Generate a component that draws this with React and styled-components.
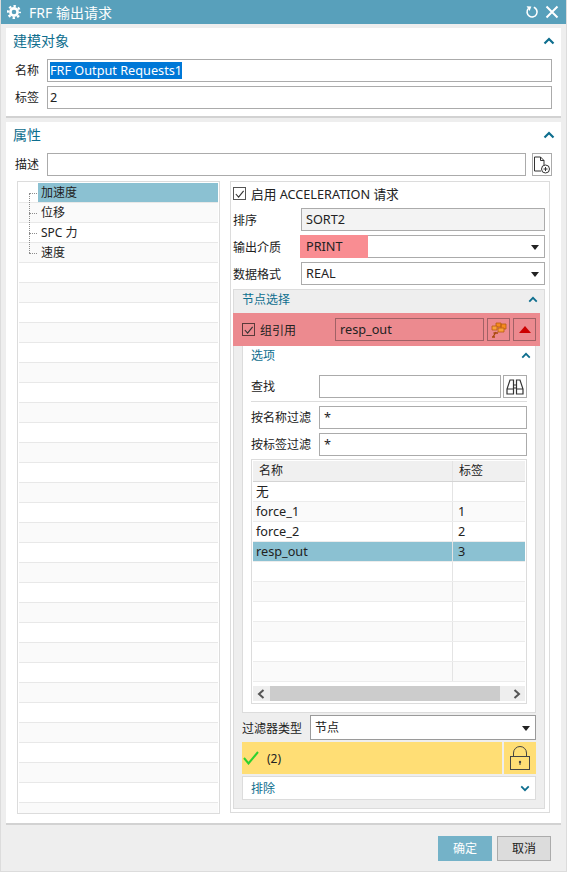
import React from "react";
import styled, { createGlobalStyle } from "styled-components";

const FONT = `"Noto Sans", "Noto Sans CJK SC", sans-serif`;

const treeItems = ["加速度", "位移", "SPC 力", "速度"];
const treeRows = Array.from({ length: 32 }, (_, i) => treeItems[i] || "");

const tableRows = [
    ["无", ""],
    ["force_1", "1"],
    ["force_2", "2"],
    ["resp_out", "3"],
    ["", ""],
    ["", ""],
    ["", ""],
    ["", ""],
    ["", ""],
    ["", ""],
];

const Chevron = ({ down, small }) => (
    <ChevronIcon viewBox="0 0 12 8" $small={small}>
        <path d={down ? "M1.5 1.5 L6 6 L10.5 1.5" : "M1.5 6.5 L6 2 L10.5 6.5"} fill="none" stroke="#0e6e8e" strokeWidth="2.2" />
    </ChevronIcon>
);

const CheckMark = () => (
    <svg viewBox="0 0 12 12" width="12" height="12">
        <path d="M2 6 L5 9.5 L10.5 2.5" fill="none" stroke="#333" strokeWidth="1.2" />
    </svg>
);

const Select = ({ children, highlight, tall }) => (
    <SelectBox $tall={tall}>
        <SelectText $highlight={highlight} $tall={tall}>{children}</SelectText>
        <Caret $tall={tall} />
    </SelectBox>
);

const App = () => {
    return (
        <>
            <GlobalStyle />
            <Dialog>
                <TitleBar>
                    <TitleLeft>
                        <svg viewBox="0 0 14 14" width="14" height="14">
                            <circle cx="7" cy="7" r="3.6" fill="none" stroke="#fff" strokeWidth="2.6" />
                            <circle cx="7" cy="7" r="5.9" fill="none" stroke="#fff" strokeWidth="2.2" strokeDasharray="2.4 2.23" strokeDashoffset="1.2" />
                        </svg>
                        <span>FRF 输出请求</span>
                    </TitleLeft>
                    <TitleRight>
                        <svg viewBox="0 0 14 14" width="14" height="14">
                            <path d="M8.8 2.3 A5 5 0 1 1 3.2 3.8" fill="none" stroke="#fff" strokeWidth="1.6" />
                            <path d="M1.6 1.2 L6.4 1.6 L4.6 6 Z" fill="#fff" />
                        </svg>
                        <svg viewBox="0 0 14 14" width="14" height="14">
                            <path d="M1.5 1.5 L12.5 12.5 M12.5 1.5 L1.5 12.5" fill="none" stroke="#fff" strokeWidth="2" />
                        </svg>
                    </TitleRight>
                </TitleBar>

                <TopCard>
                    <CardHead>
                        <h3>建模对象</h3>
                        <Chevron />
                    </CardHead>
                    <FormRow>
                        <SideLabel>名称</SideLabel>
                        <TextBox><Selected>FRF Output Requests1</Selected></TextBox>
                    </FormRow>
                    <FormRow>
                        <SideLabel>标签</SideLabel>
                        <TextBox>2</TextBox>
                    </FormRow>
                </TopCard>

                <MainCard>
                    <CardHead>
                        <h3>属性</h3>
                        <Chevron />
                    </CardHead>
                    <FormRow>
                        <SideLabel>描述</SideLabel>
                        <TextBox />
                        <IconButton>
                            <svg viewBox="0 0 18 18" width="18" height="18">
                                <path d="M11 9 V4.5 L7.5 1 H1.5 V15 H8 M7.5 1 V4.5 H11" fill="none" stroke="#333" />
                                <circle cx="12.5" cy="13" r="4" fill="#fff" stroke="#333" />
                                <path d="M10.5 13 H14.5 M12.5 11 V15" stroke="#333" />
                            </svg>
                        </IconButton>
                    </FormRow>

                    <Columns>
                        <TreePanel>
                            {treeRows.map((item, i) => (
                                <TreeRow key={i} $odd={i % 2 === 1}>
                                    {item && (
                                        <TreeText $selected={i === 0} $last={i === 3} $first={i === 0}>
                                            {item}
                                        </TreeText>
                                    )}
                                </TreeRow>
                            ))}
                        </TreePanel>

                        <RightPanel>
                            <CheckRow>
                                <CheckBox><CheckMark /></CheckBox>
                                启用 ACCELERATION 请求
                            </CheckRow>
                            <PropRow>
                                <PropLabel>排序</PropLabel>
                                <TextBox $readonly>SORT2</TextBox>
                            </PropRow>
                            <PropRow>
                                <PropLabel>输出介质</PropLabel>
                                <Select highlight>PRINT</Select>
                            </PropRow>
                            <PropRow>
                                <PropLabel>数据格式</PropLabel>
                                <Select>REAL</Select>
                            </PropRow>

                            <NodeGroup>
                                <GroupHead>
                                    <span>节点选择</span>
                                    <Chevron small />
                                </GroupHead>
                                <RedRow>
                                    <RedCheck>
                                        <CheckBox $red><CheckMark /></CheckBox>
                                        组引用
                                    </RedCheck>
                                    <RedInput>resp_out</RedInput>
                                    <RedButton>
                                        <svg viewBox="0 0 18 18" width="18" height="18">
                                            <path d="M6 2 H11 V6 H6 Z M11 3 H16 V8 H11 Z" fill="#f58a1f" stroke="#b85a10" strokeWidth="0.8" />
                                            <path d="M2 5 H7 V9 H2 Z M8 7 H14 V11 H8 Z" fill="#f9a13a" stroke="#b85a10" strokeWidth="0.8" />
                                            <path d="M6 11 L3 16 M3.5 12 H8 M2 16 H5" fill="none" stroke="#a8480c" strokeWidth="1.3" />
                                        </svg>
                                    </RedButton>
                                    <RedButton>
                                        <svg viewBox="0 0 12 7" width="12" height="7">
                                            <path d="M6 0 L12 7 H0 Z" fill="#cc0000" />
                                        </svg>
                                    </RedButton>
                                </RedRow>

                                <OptionsBox>
                                    <GroupHead $inner>
                                        <span>选项</span>
                                        <Chevron small />
                                    </GroupHead>
                                    <FindRow>
                                        <OptLabel>查找</OptLabel>
                                        <TextBox />
                                        <IconButton $find>
                                            <svg viewBox="0 0 20 18" width="20" height="18">
                                                <path d="M5 2 H8.5 V16 H2 V11 Z M15 2 H11.5 V16 H18 V11 Z M8.5 7 H11.5 M8.5 10 H11.5 M2 11 H8.5 M11.5 11 H18" fill="none" stroke="#333" strokeWidth="1.2" />
                                            </svg>
                                        </IconButton>
                                    </FindRow>
                                    <FilterRow>
                                        <OptLabel>按名称过滤</OptLabel>
                                        <TextBox>*</TextBox>
                                    </FilterRow>
                                    <FilterRow>
                                        <OptLabel>按标签过滤</OptLabel>
                                        <TextBox>*</TextBox>
                                    </FilterRow>

                                    <TableFrame>
                                        <HeadRow>
                                            <NameCell $head>名称</NameCell>
                                            <TagCell $head>标签</TagCell>
                                        </HeadRow>
                                        {tableRows.map(([name, tag], i) => (
                                            <BodyRow key={i} $odd={i % 2 === 1} $selected={name === "resp_out"}>
                                                <NameCell>{name}</NameCell>
                                                <TagCell>{tag}</TagCell>
                                            </BodyRow>
                                        ))}
                                        <ScrollBar>
                                            <svg viewBox="0 0 8 10" width="8" height="10">
                                                <path d="M6.5 1 L2 5 L6.5 9" fill="none" stroke="#555" strokeWidth="2" />
                                            </svg>
                                            <ScrollThumb />
                                            <svg viewBox="0 0 8 10" width="8" height="10">
                                                <path d="M1.5 1 L6 5 L1.5 9" fill="none" stroke="#555" strokeWidth="2" />
                                            </svg>
                                        </ScrollBar>
                                    </TableFrame>
                                </OptionsBox>

                                <FilterType>
                                    <span>过滤器类型</span>
                                    <Select tall>节点</Select>
                                </FilterType>

                                <StatusRow>
                                    <StatusBar>
                                        <svg viewBox="0 0 16 14" width="16" height="14">
                                            <path d="M1 7 L5.5 12.5 L15 1" fill="none" stroke="#2fd12f" strokeWidth="2" />
                                        </svg>
                                        <span>(2)</span>
                                    </StatusBar>
                                    <LockCell>
                                        <svg viewBox="0 0 20 24" width="20" height="24">
                                            <path d="M3.5 10.5 V7 A6.5 6.5 0 0 1 16.5 7 V10.5" fill="none" stroke="#444" />
                                            <rect x="0.5" y="10.5" width="19" height="13" fill="none" stroke="#444" />
                                            <circle cx="10" cy="16" r="1.2" fill="#444" />
                                            <path d="M10 16 V19" stroke="#444" />
                                        </svg>
                                    </LockCell>
                                </StatusRow>

                                <ExcludeBox>
                                    <span>排除</span>
                                    <Chevron down small />
                                </ExcludeBox>
                            </NodeGroup>
                        </RightPanel>
                    </Columns>
                </MainCard>

                <Footer>
                    <OkButton>确定</OkButton>
                    <CancelButton>取消</CancelButton>
                </Footer>
            </Dialog>
        </>
    );
};

//--------------------------------- STYLES ---------------------------------
const GlobalStyle = createGlobalStyle`
    html, body {
        margin: 0;
        padding: 0;
        background: #eeeeee;
    }
    * {
        box-sizing: border-box;
    }
`;

const Dialog = styled.div`
    width: 567px;
    height: 872px;
    background: #eeeeee;
    border: 1px solid #dcdcdc;
    border-top: none;
    overflow: hidden;
    font-family: ${FONT};
    font-size: 12px;
    color: #222;
`;

const TitleBar = styled.div`
    height: 24px;
    margin: 0 -1px;
    padding: 0 8px 0 7px;
    display: flex;
    align-items: center;
    justify-content: space-between;
    background: #58a0bb;
    color: #fff;
`;

const TitleLeft = styled.div`
    display: flex;
    align-items: center;
    gap: 8px;
    font-size: 14px;
`;

const TitleRight = styled.div`
    display: flex;
    align-items: center;
    gap: 6px;
`;

const TopCard = styled.div`
    margin: 4px 5px 0;
    height: 90px;
    background: #fff;
    border-bottom: 2px solid #d2d2d2;
`;

const MainCard = styled.div`
    margin: 4px 5px 0;
    height: 703px;
    background: #fff;
    border-bottom: 2px solid #d2d2d2;
`;

const CardHead = styled.div`
    height: 31px;
    padding: 0 6px 5px 7px;
    display: flex;
    align-items: center;
    justify-content: space-between;

    h3 {
        margin: -2px 0 0;
        font-size: 14px;
        font-weight: 400;
        color: #0e6e8e;
    }
`;

const ChevronIcon = styled.svg`
    width: ${(props) => (props.$small ? "10px" : "12px")};
    height: ${(props) => (props.$small ? "7px" : "8px")};
    flex: none;
`;

const FormRow = styled.div`
    height: 23px;
    margin: 0 9px 4px 0;
    display: flex;
    gap: 6px;
`;

const SideLabel = styled.div`
    width: 35px;
    padding-left: 9px;
    line-height: 23px;
    flex: none;
`;

const TextBox = styled.div`
    flex: 1;
    min-width: 0;
    height: 23px;
    padding-left: 2px;
    line-height: 21px;
    font-size: 12.7px;
    white-space: nowrap;
    border: 1px solid #ababab;
    background: ${(props) => (props.$readonly ? "#f3f3f3" : "#fff")};
`;

const Selected = styled.span`
    display: inline-block;
    vertical-align: top;
    height: 17px;
    margin-top: 2px;
    line-height: 17px;
    background: #0078d7;
    color: #fff;
`;

const IconButton = styled.div`
    width: ${(props) => (props.$find ? "24px" : "20px")};
    height: 23px;
    flex: none;
    display: flex;
    align-items: center;
    justify-content: center;
    border: 1px solid #ababab;
    background: #fff;
`;

const Columns = styled.div`
    margin: 5px 0 0 11px;
    display: flex;
    gap: 10px;
`;

const TreePanel = styled.div`
    width: 203px;
    height: 633px;
    padding: 1px;
    border: 1px solid #dcdcdc;
    overflow: hidden;
`;

const TreeRow = styled.div`
    height: 20px;
    padding-left: 19px;
    background: ${(props) => (props.$odd ? "#fafafa" : "#fff")};
    border-bottom: 1px solid #e8e8e8;
`;

const TreeText = styled.div`
    position: relative;
    height: 19px;
    padding-left: 3px;
    line-height: 20px;
    background: ${(props) => (props.$selected ? "#8bc1d2" : "transparent")};

    &::before {
        content: "";
        position: absolute;
        left: -9px;
        width: 9px;
        top: ${(props) => (props.$first ? "10px" : "-1px")};
        height: ${(props) => (props.$first ? "10px" : props.$last ? "11px" : "21px")};
        border-left: 1px dotted #8c8c8c;
    }

    &::after {
        content: "";
        position: absolute;
        left: -9px;
        width: 8px;
        top: 10px;
        border-top: 1px dotted #8c8c8c;
    }
`;

const CheckRow = styled.div`
    height: 26px;
    padding-bottom: 3px;
    display: flex;
    align-items: center;
    gap: 5px;
    font-size: 12.7px;
`;

const CheckBox = styled.span`
    width: 13px;
    height: 13px;
    flex: none;
    display: inline-flex;
    align-items: center;
    justify-content: center;
    border: 1px solid ${(props) => (props.$red ? "#5a3a3a" : "#555")};
    background: ${(props) => (props.$red ? "transparent" : "#fff")};
`;

const PropRow = styled.div`
    height: 23px;
    margin-bottom: 4px;
    display: flex;
`;

const PropLabel = styled.div`
    width: 68px;
    flex: none;
    line-height: 25px;
`;

const SelectBox = styled.div`
    position: relative;
    flex: 1;
    height: ${(props) => (props.$tall ? "25px" : "23px")};
    border: 1px solid ${(props) => (props.$tall ? "#9a9a9a" : "#ababab")};
    background: #fff;
    font-size: ${(props) => (props.$tall ? "12px" : "12.7px")};
    line-height: ${(props) => (props.$tall ? "23px" : "21px")};
`;

const SelectText = styled.div`
    width: ${(props) => (props.$highlight ? "68px" : "auto")};
    height: ${(props) => (props.$highlight ? "23px" : "21px")};
    margin: ${(props) => (props.$highlight ? "-1px 0 0 -2px" : "0")};
    padding-left: ${(props) => (props.$highlight ? "6px" : "4px")};
    line-height: ${(props) => (props.$highlight ? "23px" : "inherit")};
    background: ${(props) => (props.$highlight ? "#f98d92" : "transparent")};
`;

const Caret = styled.span`
    position: absolute;
    right: 5px;
    top: ${(props) => (props.$tall ? "10px" : "9px")};
    border-left: 4px solid transparent;
    border-right: 4px solid transparent;
    border-top: 5px solid #222;
`;

const NodeGroup = styled.div`
    height: 520px;
    padding: 0 8px;
    background: #eeeeee;
    border: 1px solid #dcdcdc;
`;

const GroupHead = styled.div`
    height: ${(props) => (props.$inner ? "29px" : "23px")};
    padding-bottom: ${(props) => (props.$inner ? "11px" : "5px")};
    display: flex;
    align-items: center;
    justify-content: space-between;
    color: #0e6e8e;

    svg {
        margin-right: ${(props) => (props.$inner ? "-4px" : "-2px")};
    }
`;

const RedRow = styled.div`
    position: relative;
    z-index: 1;
    margin: 0 -4px 0 -9px;
    padding: 0 4px 0 9px;
    height: 33px;
    display: flex;
    align-items: center;
    gap: 3px;
    background: #ec8a8f;
`;

const RedCheck = styled.div`
    width: 90px;
    flex: none;
    display: flex;
    align-items: center;
    gap: 5px;
    font-size: 12px;
`;

const RedInput = styled.div`
    width: 149px;
    height: 23px;
    padding-left: 4px;
    line-height: 21px;
    font-size: 12.7px;
    border: 1px solid #a06266;
`;

const RedButton = styled.div`
    width: 23px;
    height: 23px;
    display: flex;
    align-items: center;
    justify-content: center;
    border: 1px solid #a06266;
`;

const OptionsBox = styled.div`
    height: 368px;
    margin-top: -1px;
    padding: 0 8px;
    background: #fff;
    border: 1px solid #dcdcdc;
`;

const OptLabel = styled.div`
    width: 68px;
    flex: none;
    line-height: 23px;
`;

const FindRow = styled.div`
    height: 27px;
    padding-bottom: 3px;
    display: flex;
    gap: 2px;
    border-bottom: 1px solid #dcdcdc;
    margin-bottom: 4px;

    > ${OptLabel} {
        margin-right: -2px;
    }
`;

const FilterRow = styled.div`
    height: 23px;
    margin-bottom: 4px;
    display: flex;

    & + & {
        margin-bottom: 3px;
    }
`;

const TableFrame = styled.div`
    height: 245px;
    padding: 1px;
    border: 1px solid #dcdcdc;
`;

const HeadRow = styled.div`
    height: 21px;
    display: flex;
    background: #f0f0f0;
    border-bottom: 1px solid #d4d4d4;
`;

const BodyRow = styled.div`
    height: 20px;
    display: flex;
    background: ${(props) => (props.$selected ? "#8bc1d2" : props.$odd ? "#fafafa" : "#fff")};
    border-bottom: 1px solid #ececec;
`;

const NameCell = styled.div`
    width: 200px;
    padding-left: ${(props) => (props.$head ? "6px" : "3px")};
    line-height: 19px;
    font-size: ${(props) => (props.$head ? "12px" : "12.7px")};
    border-right: 1px solid #e4e4e4;
`;

const TagCell = styled.div`
    flex: 1;
    padding-left: ${(props) => (props.$head ? "6px" : "5px")};
    line-height: 19px;
    font-size: ${(props) => (props.$head ? "12px" : "12.7px")};
`;

const ScrollBar = styled.div`
    height: 15px;
    margin-top: 4px;
    display: flex;
    align-items: center;
    padding: 0 4px;
    background: #eeeeee;

    svg:last-child {
        margin-left: auto;
    }
`;

const ScrollThumb = styled.div`
    width: 230px;
    height: 15px;
    margin-left: 5px;
    background: #cccccc;
`;

const RightPanel = styled.div`
    width: 320px;
    height: 632px;
    padding: 0 4px 0 2px;
    border: 1px solid #dcdcdc;

    ${TextBox} {
        padding-left: 4px;
    }
`;

const FilterType = styled.div`
    height: 25px;
    margin-top: 2px;
    display: flex;
    align-items: center;

    > span {
        width: 68px;
        flex: none;
    }
`;

const StatusRow = styled.div`
    height: 32px;
    margin-top: 2px;
    display: flex;
    gap: 2px;
`;

const StatusBar = styled.div`
    flex: 1;
    padding-left: 1px;
    display: flex;
    align-items: center;
    gap: 8px;
    background: #ffde75;
`;

const LockCell = styled.div`
    width: 32px;
    display: flex;
    align-items: center;
    justify-content: center;
    background: #ffde75;
`;

const ExcludeBox = styled.div`
    height: 24px;
    margin-top: 2px;
    padding: 0 5px 0 8px;
    display: flex;
    align-items: center;
    justify-content: space-between;
    background: #fff;
    border: 1px solid #dcdcdc;
    color: #0e6e8e;
`;

const Footer = styled.div`
    margin-top: 11px;
    padding-right: 15px;
    display: flex;
    justify-content: flex-end;
    gap: 5px;
`;

const OkButton = styled.div`
    width: 54px;
    height: 25px;
    line-height: 25px;
    text-align: center;
    background: #74b2c8;
    color: #fff;
`;

const CancelButton = styled.div`
    width: 54px;
    height: 25px;
    line-height: 23px;
    text-align: center;
    background: #dcdcdc;
    border: 1px solid #ababab;
`;

export default App;
